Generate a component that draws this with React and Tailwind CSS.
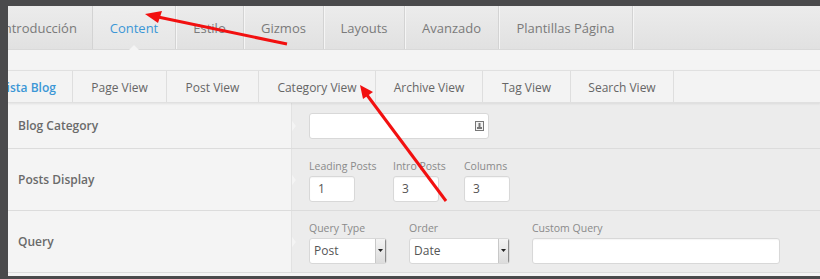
import React from "react";

const topTabs = [
  { label: "Introducción", w: "w-[108px]", first: true },
  { label: "Content", w: "w-[83px]", active: true },
  { label: "Estilo", w: "w-[68px]" },
  { label: "Gizmos", w: "w-[80px]" },
  { label: "Layouts", w: "w-[81px]" },
  { label: "Avanzado", w: "w-[94px]" },
  { label: "Plantillas Página", w: "w-[134px]" },
];

const subTabs = [
  { label: "Vista Blog", w: "w-[90px]", active: true, first: true },
  { label: "Page View", w: "w-[94px]" },
  { label: "Post View", w: "w-[92px]" },
  { label: "Category View", w: "w-[117px]" },
  { label: "Archive View", w: "w-[107px]" },
  { label: "Tag View", w: "w-[88px]" },
  { label: "Search View", w: "w-[103px]" },
];

function Field({ label, w, children }) {
  return (
    <div className={`${w} shrink-0 flex flex-col`}>
      <span className="text-[10.5px] leading-[13px] text-[#8a8a8a] mb-[3px] whitespace-nowrap">{label}</span>
      {children}
    </div>
  );
}

function TextBox({ w, value }) {
  return (
    <div
      className={`${w} h-[26px] bg-white border border-[#d8d8d8] rounded-[3px] shadow-[inset_0_1px_1px_rgba(0,0,0,0.04)] flex items-center px-[8px] text-[12px] text-[#555]`}
    >
      {value}
    </div>
  );
}

function SelectBox({ w, value }) {
  return (
    <div
      className={`${w} h-[26px] bg-white border border-[#d8d8d8] rounded-[3px] flex items-center text-[12px] text-[#555] overflow-hidden`}
    >
      <span className="flex-1 pl-[4px]">{value}</span>
      <div className="w-[10px] h-full mr-[1px] bg-gradient-to-b from-[#f4f4f4] to-[#dcdcdc] border-l border-[#c8c8c8] shadow-[1px_0_1px_rgba(0,0,0,0.45)] flex items-center justify-center">
        <svg width="5" height="3" viewBox="0 0 5 3">
          <path d="M0 0 L5 0 L2.5 3 Z" fill="#222" />
        </svg>
      </div>
    </div>
  );
}

function Row({ label, h, children }) {
  return (
    <div className={`flex ${h} border-b border-[#dcdcdc]`}>
      <div className="w-[284px] shrink-0 bg-[#f4f4f4] flex items-center pl-[10px] text-[12px] font-semibold text-[#6a6a6a] border-r border-[#e2e2e2]">
        {label}
      </div>
      <div className="relative flex-1 bg-[#ececec] pl-[17px] flex items-center">
        <div className="absolute left-0 top-1/2 -translate-y-1/2 w-0 h-0 border-y-[5px] border-y-transparent border-l-[4px] border-l-[#f4f4f4]" />
        {children}
      </div>
    </div>
  );
}

export default function App() {
  return (
    <div
      className="relative w-[820px] h-[279px] overflow-hidden bg-[#4a4a4c] pt-[6px] pl-[8px]"
      style={{ fontFamily: '"Open Sans", "Noto Sans", Arial, sans-serif' }}
    >
      <div className="h-[270px] overflow-hidden bg-[#f4f4f4]">
        {/* top tabs */}
        <div className="relative flex h-[44px] bg-gradient-to-b from-[#ececec] to-[#e1e1e1] border-b border-[#d9d9d9]">
          {topTabs.map((t) => (
            <div
              key={t.label}
              className={`${t.w} shrink-0 h-full flex items-center justify-center pt-[3px] text-[13px] border-r border-[#d3d3d3] shadow-[1px_0_0_#f5f5f5] ${
                t.first ? "-ml-[23px]" : ""
              } ${t.active ? "text-[#3b97d6] bg-gradient-to-b from-[#eeeeee] to-[#e6e6e6] relative" : "text-[#7a7a7a]"}`}
            >
              {t.label}
              {t.active && (
                <div className="absolute left-1/2 -translate-x-1/2 bottom-[-1px] w-0 h-0 border-x-[5px] border-x-transparent border-b-[5px] border-b-[#f4f4f4]" />
              )}
            </div>
          ))}
        </div>

        <div className="h-[20px] bg-[#f4f4f4]" />

        {/* sub tabs */}
        <div className="flex h-[33px] bg-[#f3f3f3] border-t border-[#e0e0e0] border-b border-[#d6d6d6] shadow-[0_1px_2px_rgba(0,0,0,0.08)] relative z-10">
          {subTabs.map((t) => (
            <div
              key={t.label}
              className={`${t.w} shrink-0 h-full flex items-center justify-center pt-[3px] text-[12px] border-r border-[#dedede] ${
                t.first ? "-ml-[25px]" : ""
              } ${t.active ? "text-[#3b97d6] font-semibold" : "text-[#666]"}`}
            >
              {t.label}
            </div>
          ))}
        </div>

        <Row label="Blog Category" h="h-[46px]">
          <div className="w-[180px] h-[26px] bg-white border border-[#d8d8d8] rounded-[3px] flex items-center justify-end pr-[4px]">
            <svg width="9" height="10" viewBox="0 0 9 10">
              <rect x="0.5" y="0.5" width="8" height="9" fill="#f2f2f2" stroke="#777" />
              <rect x="2" y="6" width="5" height="2" fill="#777" />
              <rect x="3.5" y="2" width="2" height="4" fill="#777" />
            </svg>
          </div>
        </Row>

        <Row label="Posts Display" h="h-[62px]">
          <div className="flex pt-[2px]">
            <Field label="Leading Posts" w="w-[84px]">
              <TextBox w="w-[46px]" value="1" />
            </Field>
            <Field label="Intro Posts" w="w-[71px]">
              <TextBox w="w-[46px]" value="3" />
            </Field>
            <Field label="Columns" w="w-[60px]">
              <TextBox w="w-[46px]" value="3" />
            </Field>
          </div>
        </Row>

        <Row label="Query" h="h-[62px]">
          <div className="flex pt-[2px]">
            <Field label="Query Type" w="w-[100px]">
              <SelectBox w="w-[78px]" value="Post" />
            </Field>
            <Field label="Order" w="w-[123px]">
              <SelectBox w="w-[101px]" value="Date" />
            </Field>
            <Field label="Custom Query" w="w-[250px]">
              <TextBox w="w-[248px]" value="" />
            </Field>
          </div>
        </Row>
      </div>

      {/* annotation arrows */}
      <svg className="absolute inset-0 z-20 pointer-events-none" width="820" height="279">
        <line x1="287" y1="44" x2="158" y2="17" stroke="#f21010" strokeWidth="3" />
        <path d="M145 14 L162 11 L158 23 Z" fill="#f21010" />
        <line x1="446" y1="201" x2="367" y2="95" stroke="#f21010" strokeWidth="3" />
        <path d="M360 85 L373 92 L363 99 Z" fill="#f21010" />
      </svg>
    </div>
  );
}
